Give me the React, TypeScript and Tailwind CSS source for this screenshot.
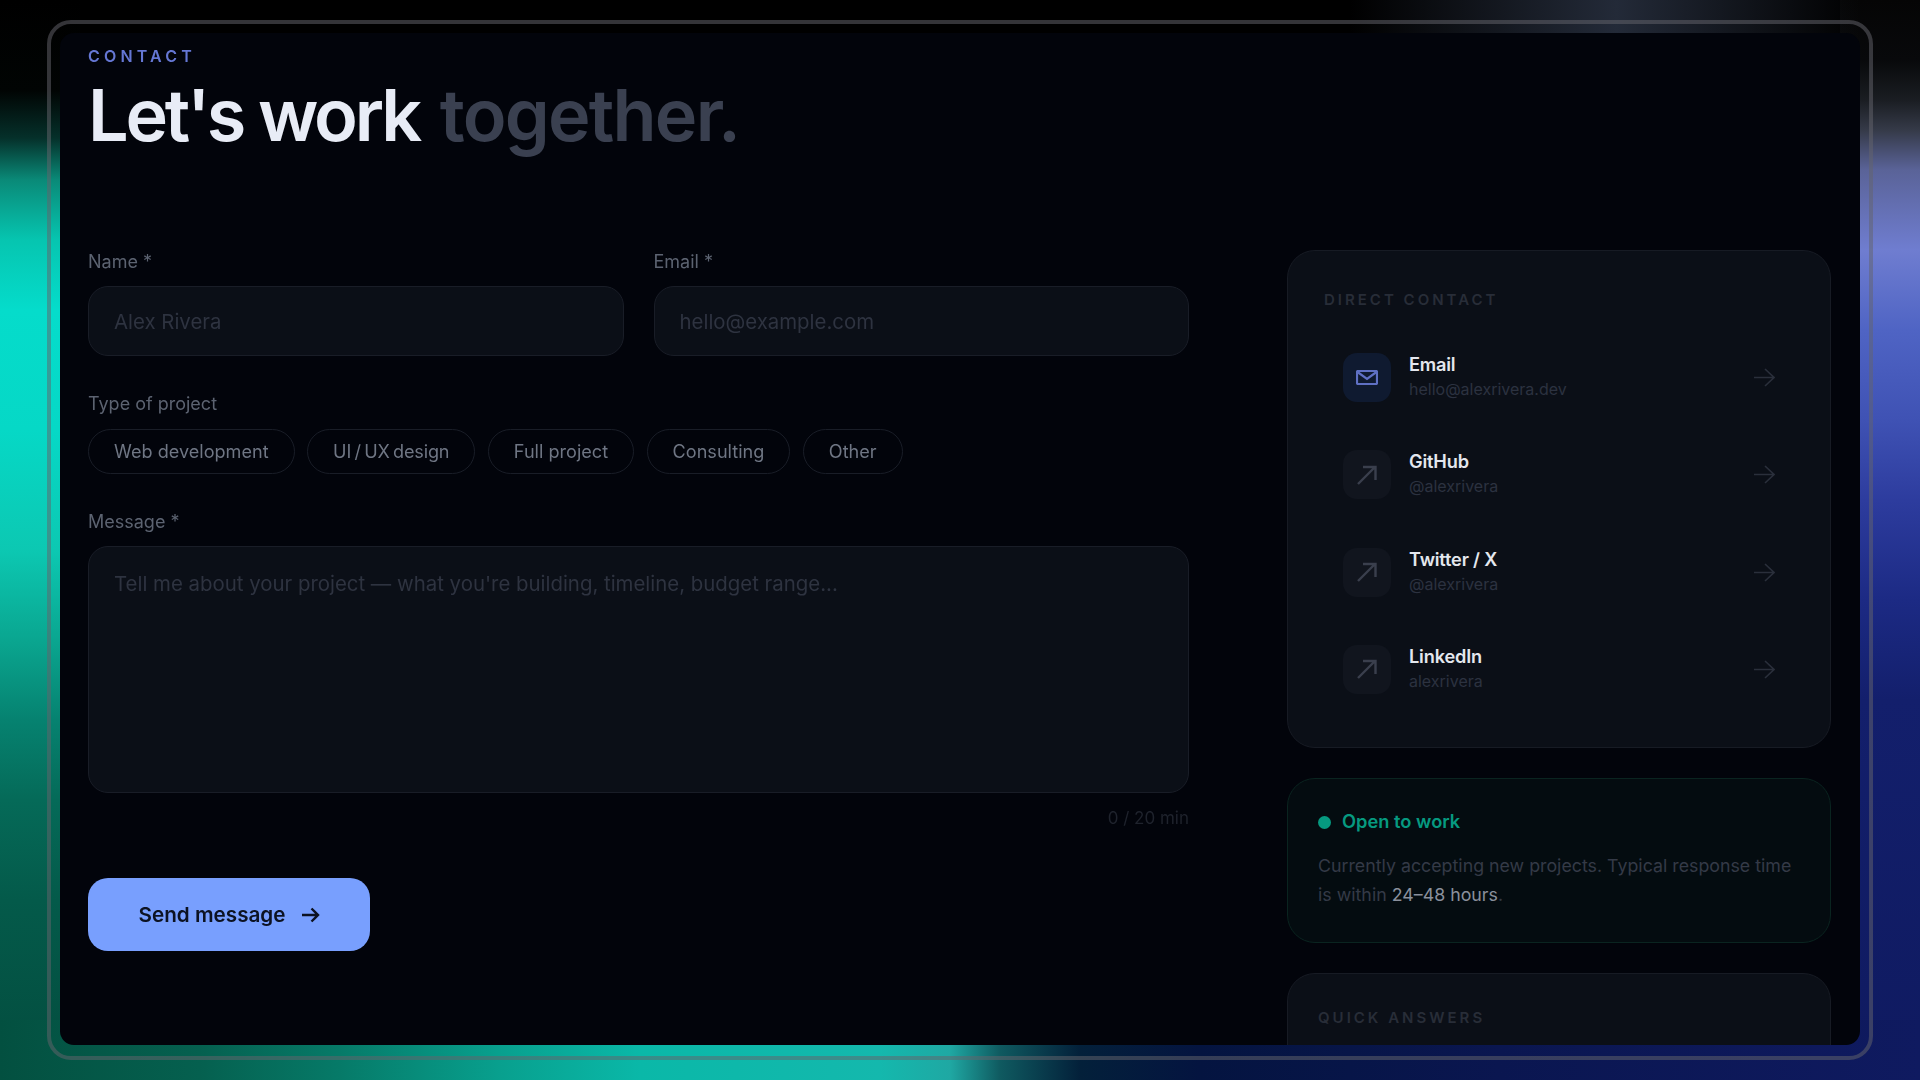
import type { ReactNode } from 'react'

const contacts = [
  { name: 'Email', handle: 'hello@alexrivera.dev', mail: true },
  { name: 'GitHub', handle: '@alexrivera', mail: false },
  { name: 'Twitter / X', handle: '@alexrivera', mail: false },
  { name: 'LinkedIn', handle: 'alexrivera', mail: false },
]

const projectTypes = ['Web development', 'UI / UX design', 'Full project', 'Consulting', 'Other']

function Label({ children }: { children: ReactNode }) {
  return <label className="block h-5 text-[18px] leading-5 text-[#5c6371]">{children}</label>
}

function ArrowRight() {
  return (
    <svg width="21" height="19" viewBox="0 0 21 19" fill="none" stroke="#2a2f3b" strokeWidth="1.6">
      <path d="M0 9.5H20M11 1l9 8.5-9 8.5" />
    </svg>
  )
}

function ArrowUpRight() {
  return (
    <svg width="20" height="20" viewBox="0 0 20 20" fill="none" stroke="#3a3f4d" strokeWidth="2.4">
      <path d="M1 19L18 2M6 2h12.500v13" />
    </svg>
  )
}

function MailIcon() {
  return (
    <svg width="22" height="15" viewBox="0 0 22 15" fill="none" stroke="#5f70c4" strokeWidth="2.200">
      <rect x="1" y="1" width="20" height="13" rx="1" />
      <path d="M1.500 2L11 9l9.500-7" />
    </svg>
  )
}

export default function App() {
  return (
    <div className="relative h-[1080px] w-[1920px] overflow-hidden bg-black pl-[47px] pt-[20px] font-['Inter',sans-serif]">
      {/* blurred backdrop, only the edges show around the panel */}
      <div className="absolute left-0 top-0 h-[1080px] w-[80px] bg-[linear-gradient(180deg,#000_0,#010403_90px,#05302a_138px,#0a8a78_180px,#06c5b0_240px,#05dccb_310px,#06d8c6_430px,#0cc8b2_550px,#0aa690_640px,#068270_720px,#056a58_800px,#045a4a_900px,#034c3e_1080px)]" />
      <div className="absolute right-0 top-0 h-[1080px] w-[80px] bg-[linear-gradient(180deg,#050505_0,#08090b_60px,#1a1d22_100px,#353a48_130px,#5a6398_170px,#6f7dd0_250px,#4f64c4_330px,#3f52b4_420px,#2d3c9e_500px,#1c2a84_600px,#131f6c_700px,#0f1a60_1080px)]" />
      <div className="absolute bottom-0 left-0 h-[60px] w-[1920px] bg-[linear-gradient(90deg,#035040_0,#05604f_200px,#067a68_340px,#08a08e_500px,#0ab8a8_640px,#14b8ad_880px,#1fa8a3_950px,#0f5a60_1000px,#03203a_1080px,#041440_1200px,#0a1650_1500px,#0f1a60_1920px)]" />
      <div className="absolute left-0 top-0 h-[40px] w-[1920px] bg-[linear-gradient(90deg,transparent_1350px,#232a38_1616px,transparent_1860px)]" />

      <div className="relative h-[1040px] w-[1826px] rounded-[24px] border-4 border-[rgba(100,100,108,0.52)] pb-[11px] pl-[9px] pr-[9px] pt-[9px]">
        <main className="h-full overflow-hidden rounded-[14px] bg-[#02040b] px-7 pt-[14px] blur-[0.5px]">
          <div className="h-[18px] text-[16px] font-semibold leading-[18px] tracking-[0.26em] text-[#6577d4]">CONTACT</div>
          <h1 className="mb-[99px] mt-[14px] text-[72px] font-semibold leading-[72px] tracking-[-0.045em] text-[#e8ecf6]">
            Let's work <span className="ml-[6px] tracking-[-0.025em] text-[#3a4050]">together.</span>
          </h1>

          <div className="flex items-start gap-[98px]">
            <form className="flex w-[1101px] flex-col pt-[2px]">
              <div className="grid grid-cols-2 gap-[30px]">
                <div className="flex flex-col gap-[14px]">
                  <Label>Name *</Label>
                  <input
                    placeholder="Alex Rivera"
                    className="h-[70px] rounded-[20px] border border-[#191d27] bg-[#0b0f17] px-[25px] text-[20.400px] outline-none placeholder:text-[#2e3340]"
                  />
                </div>
                <div className="flex flex-col gap-[14px]">
                  <Label>Email *</Label>
                  <input
                    placeholder="hello@example.com"
                    className="h-[70px] rounded-[20px] border border-[#191d27] bg-[#0b0f17] px-[25px] text-[20.400px] outline-none placeholder:text-[#2e3340]"
                  />
                </div>
              </div>

              <div className="mt-[38px]">
                <Label>Type of project</Label>
                <div className="mt-[15px] flex gap-[12.500px]">
                  {projectTypes.map((t) => (
                    <button
                      key={t}
                      type="button"
                      className={`h-[45px] rounded-full border border-[#191d27] px-[25px] text-[18.100px] text-[#6f7684] ${t.includes('/') ? 'tracking-[-0.01em] [word-spacing:-1.5px]' : ''}`}
                    >
                      {t}
                    </button>
                  ))}
                </div>
              </div>

              <div className="mt-[38px]">
                <Label>Message *</Label>
                <textarea
                  placeholder="Tell me about your project — what you're building, timeline, budget range..."
                  className="mt-[14px] block h-[247px] w-full resize-none rounded-[20px] border border-[#191d27] bg-[#0b0f17] px-[25px] py-[24px] text-[20.400px] leading-[26px] outline-none placeholder:text-[#2e3340]"
                />
              </div>

              <div className="mt-[15px] text-right text-[17px] leading-5 text-[#1f232d]">0 / 20 min</div>

              <button
                type="button"
                className="mt-[50px] flex h-[73px] w-[282px] items-center justify-center gap-[15px] rounded-[20px] bg-[#789ffe] text-[20.700px] font-semibold text-[#0c1222]"
              >
                Send message
                <svg width="19" height="16" viewBox="0 0 19 16" fill="none" stroke="#0c1222" strokeWidth="2.400">
                  <path d="M1 8h16M10.500 1.500L17 8l-6.500 6.500" />
                </svg>
              </button>
            </form>

            <aside className="flex w-[544px] flex-col gap-[30px]">
              <section className="rounded-[28px] border border-[#171b24] bg-[#0b0f17] px-9 pb-[29px] pt-[40px]">
                <h2 className="mb-5 text-[15px] font-semibold leading-[18px] tracking-[0.2em] text-[#282d38]">DIRECT CONTACT</h2>
                {contacts.map((c) => (
                  <div key={c.name} className="flex h-[97.250px] items-center gap-[18px] px-[19px]">
                    <div
                      className={`flex h-[49px] w-[48px] items-center justify-center rounded-[14px] ${c.mail ? 'bg-[#0f1a30]' : 'bg-[#11151e]'}`}
                    >
                      {c.mail ? <MailIcon /> : <ArrowUpRight />}
                    </div>
                    <div className="flex-1 pb-[2px]">
                      <div className="text-[18.200px] font-semibold leading-[24px] tracking-[-0.01em] text-[#e4e7ee]">{c.name}</div>
                      <div className="mt-[1px] text-[16px] leading-[24px] text-[#2c3240]">{c.handle}</div>
                    </div>
                    <ArrowRight />
                  </div>
                ))}
              </section>

              <section className="h-[165px] rounded-[28px] border border-[#0a2420] bg-[#040c10] px-[30px] pt-[31px]">
                <div className="flex h-[24px] items-center gap-[11px] text-[18.300px] font-semibold text-[#069a80]">
                  <span className="h-[13px] w-[13px] rounded-full bg-[#069a80]" />
                  Open to work
                </div>
                <p className="mt-[17px] text-[17.800px] leading-[29px] text-[#343a47]">
                  Currently accepting new projects. Typical response time is within <span className="text-[#8a909c]">24–48 hours</span>.
                </p>
              </section>

              <section className="h-[200px] rounded-[28px] border border-[#171b24] bg-[#0b0f17] px-[30px] pt-[35px]">
                <h2 className="text-[15px] font-semibold leading-[18px] tracking-[0.2em] text-[#282d38]">QUICK ANSWERS</h2>
              </section>
            </aside>
          </div>
        </main>
      </div>
    </div>
  )
}
